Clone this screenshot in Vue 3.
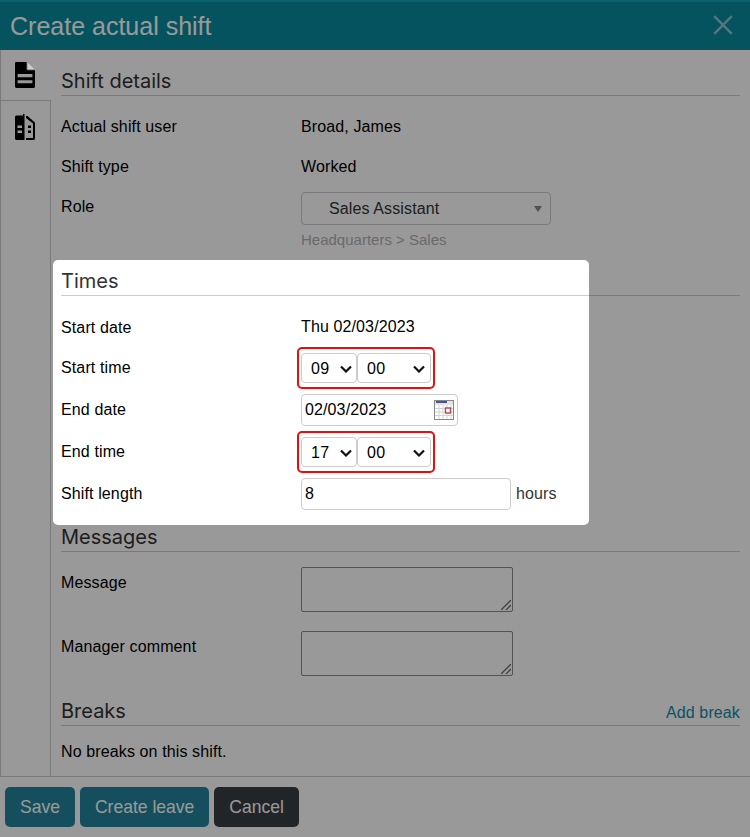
<script setup>
const hours = ['09', '17']
const minutes = ['00', '15', '30', '45']
</script>

<template>
  <div class="dialog">
    <header class="titlebar">
      <h1 class="title">Create actual shift</h1>
      <svg class="close" viewBox="0 0 20 20" width="22" height="22" aria-label="Close">
        <path d="M2 2L18 18M18 2L2 18" stroke="currentColor" stroke-width="2.2" fill="none" />
      </svg>
    </header>

    <div class="body">
      <nav class="tabs">
        <div class="tab tab-active">
          <svg viewBox="0 0 384 512" width="20" height="26" preserveAspectRatio="none">
            <path fill="#000" fill-rule="evenodd" d="M224 0H24C10.700 0 0 10.700 0 24V488C0 501.300 10.700 512 24 512H360C373.300 512 384 501.300 384 488V160H248C234.800 160 224 149.200 224 136ZM50 236H334V298H50ZM50 358H334V420H50Z" />
            <path fill="#cfcfcf" d="M244 14L370 140H244Z" />
          </svg>
        </div>
        <div class="tab">
          <svg viewBox="0 0 20 26" width="20" height="26">
            <path fill="#000" d="M9.500 0V26H1.500C.7 26 0 25.300 0 24.500V3C0 2.200.7 1.500 1.500 1.500H8V0zM2.500 11.500V14H7V11.500zM2.500 16.500V19H7V16.500z" />
            <path fill="#000" d="M11 2H12.500L20 8.500V24.500C20 25.300 19.300 26 18.500 26H11V24H18V9.500L11 4zM13 11.500H16V14H13zM13 16.500H16V19H13z" />
          </svg>
        </div>
      </nav>

      <main class="content">
        <section>
          <h2 class="heading">Shift details</h2>
          <div class="row row-first"><div class="label">Actual shift user</div><div>Broad, James</div></div>
          <div class="row"><div class="label">Shift type</div><div>Worked</div></div>
          <div class="row row-role">
            <div class="label">Role</div>
            <div class="role-value">
              <div class="role-select">
                <span>Sales Assistant</span>
                <svg viewBox="0 0 8 6" width="8" height="6"><path d="M0 0H8L4 6Z" fill="#888" /></svg>
              </div>
              <div class="hint">Headquarters &gt; Sales</div>
            </div>
          </div>
        </section>

        <section class="times">
          <div class="times-line"></div>
          <div class="card">
            <h2 class="heading">Times</h2>
            <div class="row row-first"><div class="label label-low">Start date</div><div>Thu 02/03/2023</div></div>
            <div class="row row-tall">
              <div class="label">Start time</div>
              <div class="time-pick">
                <label class="select-wrap hour">
                  <select :value="hours[0]"><option v-for="h in hours" :key="h">{{ h }}</option></select>
                  <svg viewBox="0 0 12 8" width="12" height="8"><path d="M1 1.500L6 6.500L11 1.500" /></svg>
                </label>
                <label class="select-wrap minute">
                  <select :value="minutes[0]"><option v-for="m in minutes" :key="m">{{ m }}</option></select>
                  <svg viewBox="0 0 12 8" width="12" height="8"><path d="M1 1.500L6 6.500L11 1.500" /></svg>
                </label>
              </div>
            </div>
            <div class="row row-tall">
              <div class="label">End date</div>
              <div class="date-input">
                <input class="bare" value="02/03/2023" />
                <svg viewBox="0 0 20 20" width="20" height="20">
                  <rect x="0.500" y="0.500" width="19" height="19" fill="#fff" stroke="#888" />
                  <rect x="1" y="1" width="18" height="4" fill="#e2e2e8" />
                  <rect x="2" y="1" width="11" height="2" fill="#4a4fa8" />
                  <path d="M5 5V19M9 5V19M13 5V19M17 5V19M1 8.500H19M1 12H19M1 15.500H19" stroke="#d4d4d4" fill="none" />
                  <rect x="11.500" y="8" width="5" height="5" fill="#fff" stroke="#b04a4a" stroke-width="1.400" />
                </svg>
              </div>
            </div>
            <div class="row row-tall">
              <div class="label">End time</div>
              <div class="time-pick">
                <label class="select-wrap hour">
                  <select :value="hours[1]"><option v-for="h in hours" :key="h">{{ h }}</option></select>
                  <svg viewBox="0 0 12 8" width="12" height="8"><path d="M1 1.500L6 6.500L11 1.500" /></svg>
                </label>
                <label class="select-wrap minute">
                  <select :value="minutes[0]"><option v-for="m in minutes" :key="m">{{ m }}</option></select>
                  <svg viewBox="0 0 12 8" width="12" height="8"><path d="M1 1.500L6 6.500L11 1.500" /></svg>
                </label>
              </div>
            </div>
            <div class="row row-tall">
              <div class="label">Shift length</div>
              <div class="length"><input class="length-input" value="8" /><span>hours</span></div>
            </div>
          </div>
        </section>

        <section>
          <h2 class="heading">Messages</h2>
          <div class="row row-area">
            <div class="label label-area">Message</div>
            <div class="area-wrap">
              <textarea class="area"></textarea>
              <svg viewBox="0 0 10 10" width="10" height="10"><path d="M0 10L10 0M5 10L10 5" /></svg>
            </div>
          </div>
          <div class="row row-area">
            <div class="label label-area">Manager comment</div>
            <div class="area-wrap">
              <textarea class="area"></textarea>
              <svg viewBox="0 0 10 10" width="10" height="10"><path d="M0 10L10 0M5 10L10 5" /></svg>
            </div>
          </div>
        </section>

        <section class="breaks">
          <h2 class="heading heading-split">Breaks <a class="link">Add break</a></h2>
          <p class="empty">No breaks on this shift.</p>
        </section>
      </main>
    </div>

    <footer class="footer">
      <button class="btn btn-primary">Save</button>
      <button class="btn btn-primary">Create leave</button>
      <button class="btn btn-dark">Cancel</button>
    </footer>

    <div class="scrim"></div>
  </div>
</template>

<style scoped>
.dialog {
  position: relative;
  width: 750px;
  height: 837px;
  display: flex;
  flex-direction: column;
  overflow: hidden;
  background: #fff;
  color: #000;
  font-family: "Liberation Sans", Arial, sans-serif;
  font-size: 16px;
  letter-spacing: 0.12px;
}
.scrim {
  position: absolute;
  inset: 0;
  z-index: 1;
  background: rgba(0, 0, 0, 0.4);
}
.titlebar {
  height: 50px;
  box-sizing: border-box;
  flex: none;
  display: flex;
  align-items: center;
  justify-content: space-between;
  padding: 0 16px 0 10px;
  background: #088a9d;
  border-top: 2px solid #0aa3b5;
  color: #fff;
}
.title {
  margin: 0;
  font-size: 25px;
  font-weight: 400;
  letter-spacing: 0;
  line-height: 48px;
}
.close {
  color: #8fc6d0;
  margin-top: -2px;
}
.body {
  flex: 1;
  min-height: 0;
  display: flex;
  border-left: 1px solid #ccc;
}
.tabs {
  width: 50px;
  flex: none;
  box-sizing: border-box;
  display: flex;
  flex-direction: column;
}
.tab {
  height: 50px;
  box-sizing: border-box;
  padding: 12px 0 0 14px;
  border-top: 1px solid #ccc;
  border-right: 1px solid #ccc;
}
.tab svg {
  display: block;
}
.tab-active {
  border-top: 0;
  border-right: 0;
}
.tab-active svg {
  position: relative;
  z-index: 2;
}
.tab:last-child {
  flex: 1;
  padding-top: 13px;
}
.content {
  flex: 1;
  min-width: 0;
  padding: 17px 10px 0 10px;
  box-sizing: border-box;
}
.heading {
  margin: 0;
  height: 29px;
  box-sizing: border-box;
  font-family: "Inter", "Open Sans", sans-serif;
  font-size: 20px;
  letter-spacing: 0;
  font-weight: 400;
  line-height: 28px;
  color: #333;
  border-bottom: 1px solid #ccc;
}
.row {
  display: flex;
  height: 40px;
  align-items: center;
}
.row-first {
  margin-top: 11px;
}
.row-tall {
  height: 42px;
}
.label {
  width: 240px;
  flex: none;
}
.label-low {
  padding-top: 2px;
}
.row-role {
  height: 65px;
  align-items: flex-start;
}
.row-role .label {
  line-height: 40px;
}
.role-value {
  padding-top: 5px;
}
.role-select {
  width: 250px;
  height: 33px;
  box-sizing: border-box;
  display: flex;
  align-items: center;
  justify-content: space-between;
  padding: 0 8px 0 27px;
  border: 1px solid #ccc;
  border-radius: 4px;
  background: #fff;
  color: #333;
}
.hint {
  margin-top: 6px;
  font-size: 15px;
  letter-spacing: 0;
  line-height: 18px;
  color: #b0b0b0;
}
.times {
  position: relative;
  display: flow-root;
  height: 256px;
  margin-top: 15px;
}
.times-line {
  position: absolute;
  left: 0;
  right: 0;
  top: 28px;
  height: 1px;
  background: #ccc;
}
.card {
  position: relative;
  z-index: 2;
  width: 536px;
  height: 265px;
  box-sizing: border-box;
  margin: -7px 0 0 -8px;
  padding: 7px 0 0 8px;
  background: #fff;
  border-radius: 5px;
}
.time-pick {
  display: flex;
  padding: 4px 2px;
  margin-left: -4px;
  border: 2px solid #f20a0a;
  border-radius: 5px;
}
.select-wrap {
  position: relative;
  display: block;
  height: 30px;
}
.hour {
  width: 56px;
}
.minute {
  width: 74px;
}
.select-wrap select {
  appearance: none;
  width: 100%;
  height: 100%;
  box-sizing: border-box;
  margin: 0;
  padding: 0 0 0 9px;
  border: 1px solid #ccc;
  border-radius: 4px;
  background: #fff;
  font: inherit;
  letter-spacing: 0.3px;
  color: #000;
  outline: none;
}
.select-wrap svg {
  position: absolute;
  right: 5px;
  top: 12px;
  fill: none;
  stroke: #111;
  stroke-width: 2.2;
  pointer-events: none;
}
.minute svg {
  right: 6px;
}
.date-input {
  width: 157px;
  height: 32px;
  box-sizing: border-box;
  display: flex;
  align-items: center;
  gap: 2px;
  padding: 0 3px 0 3px;
  border: 1px solid #ccc;
  border-radius: 4px;
}
.bare {
  flex: 1;
  min-width: 0;
  border: 0;
  padding: 0;
  font: inherit;
  letter-spacing: 0.12px;
  color: #000;
  outline: none;
}
.length {
  display: flex;
  align-items: center;
  gap: 5px;
  color: #333;
}
.length-input {
  width: 210px;
  height: 32px;
  box-sizing: border-box;
  padding: 0 3px;
  border: 1px solid #ccc;
  border-radius: 4px;
  font: inherit;
  color: #000;
  outline: none;
}
.row-area {
  height: 45px;
  align-items: flex-start;
  margin-top: 19px;
}
.heading + .row-area {
  margin-top: 15px;
}
.label-area {
  line-height: 32px;
}
.area-wrap {
  position: relative;
  height: 45px;
}
.area {
  display: block;
  width: 212px;
  height: 45px;
  box-sizing: border-box;
  margin: 0;
  border: 1px solid #8a8a8a;
  border-radius: 2px;
  background: #fff;
  resize: none;
  outline: none;
}
.area-wrap svg {
  position: absolute;
  right: 2px;
  bottom: 2px;
  fill: none;
  stroke: #707070;
  stroke-width: 1.4;
}
.breaks {
  margin-top: 21px;
}
.heading-split {
  display: flex;
  justify-content: space-between;
  align-items: baseline;
}
.link {
  font-family: "Liberation Sans", Arial, sans-serif;
  font-size: 16px;
  letter-spacing: 0.12px;
  color: #118aa4;
}
.empty {
  margin: 16px 0 0;
  line-height: 20px;
  color: #000;
}
.footer {
  flex: none;
  height: 61px;
  box-sizing: border-box;
  display: flex;
  gap: 5px;
  padding: 10px 5px 0;
  border-top: 1px solid #ccc;
}
.btn {
  height: 40px;
  padding: 0 15px;
  border: 0;
  border-radius: 5px;
  font-family: inherit;
  font-size: 17.52px;
  letter-spacing: 0;
  color: #fff;
}
.btn-primary {
  background: #23849b;
}
.btn-dark {
  background: #373e44;
}
</style>
